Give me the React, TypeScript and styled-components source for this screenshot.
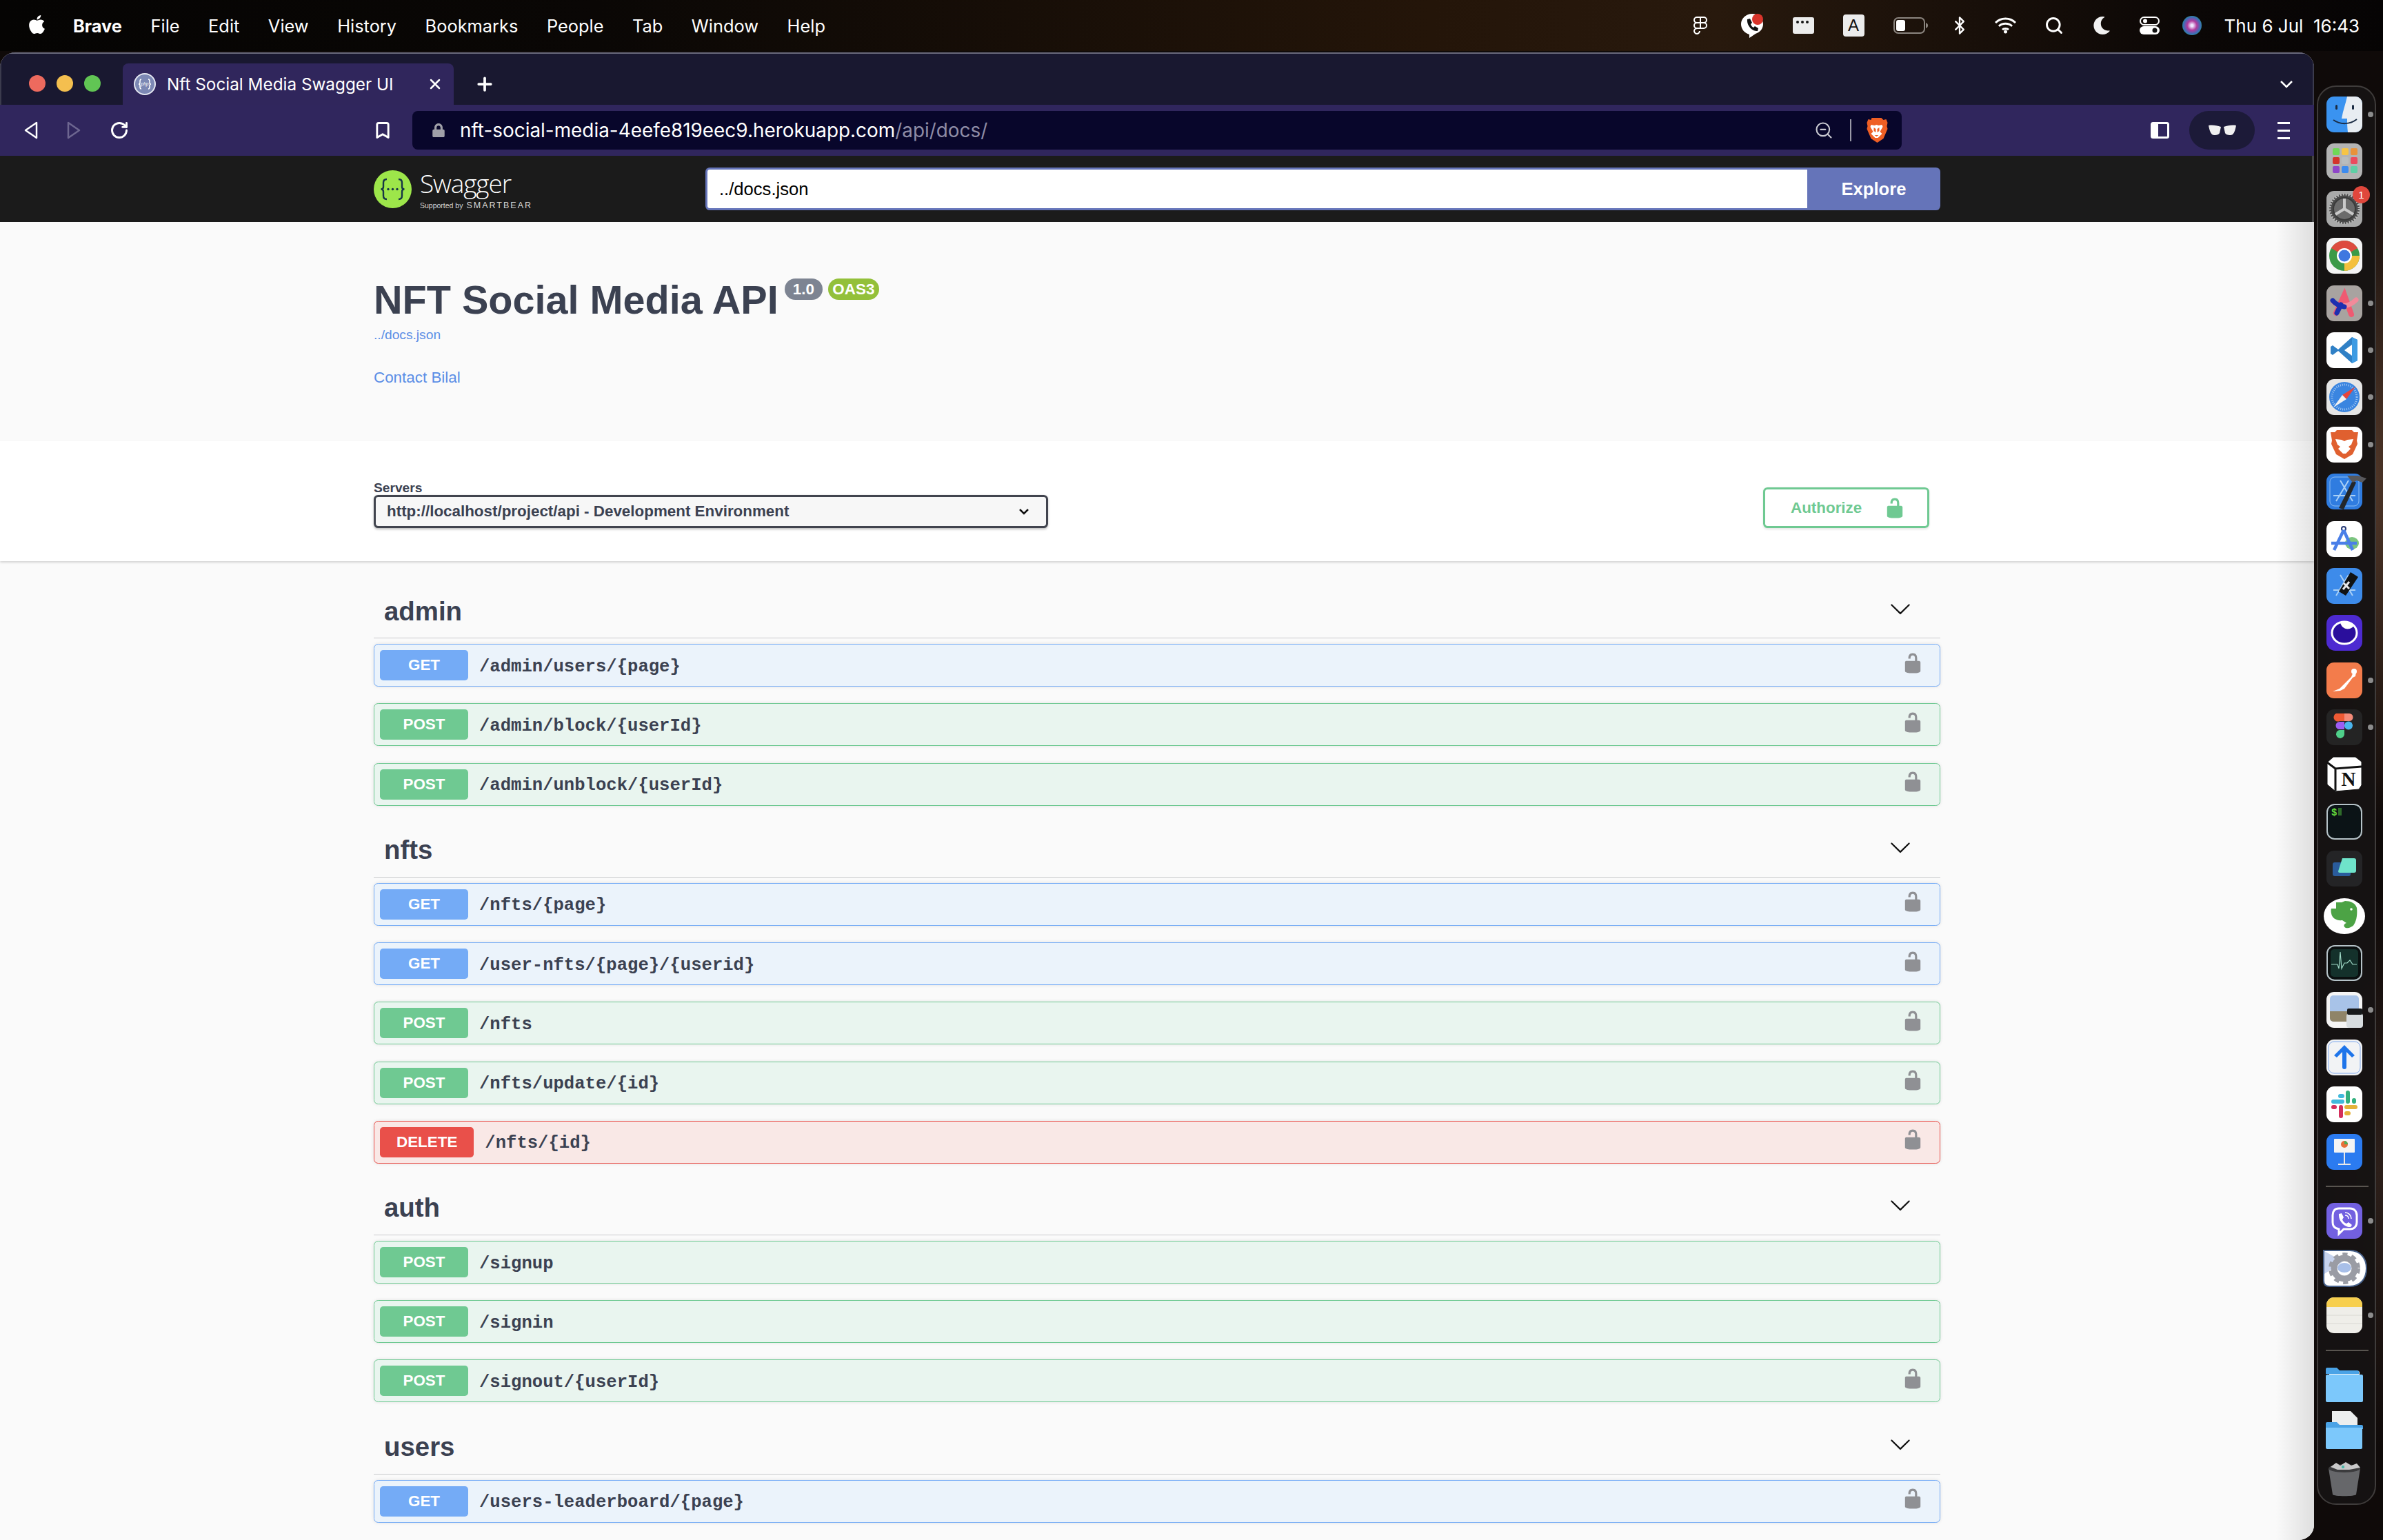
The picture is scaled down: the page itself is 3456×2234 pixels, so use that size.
import React from 'react';
import styled, { createGlobalStyle } from 'styled-components';
import { FaApple, FaLock, FaMoon } from 'react-icons/fa';
import { Bluetooth, Bookmark, Plus, RotateCw, Search, X, ZoomOut } from 'lucide-react';

const SANS = '"Liberation Sans", Arial, sans-serif';
const UI = 'Inter, "Liberation Sans", sans-serif';

type Method = 'GET' | 'POST' | 'DELETE';

const METHOD_COLORS: Record<Method, { badge: string; bg: string; border: string }> = {
  GET: { badge: '#74abf6', bg: '#ebf3fb', border: '#74abf6' },
  POST: { badge: '#6fc992', bg: '#e9f5ef', border: '#6fc992' },
  DELETE: { badge: '#e9504a', bg: '#f9e8e6', border: '#e9504a' },
};

const SECTIONS: { name: string; ops: { method: Method; path: string; open?: boolean }[] }[] = [
  {
    name: 'admin',
    ops: [
      { method: 'GET', path: '/admin/users/{page}' },
      { method: 'POST', path: '/admin/block/{userId}' },
      { method: 'POST', path: '/admin/unblock/{userId}' },
    ],
  },
  {
    name: 'nfts',
    ops: [
      { method: 'GET', path: '/nfts/{page}' },
      { method: 'GET', path: '/user-nfts/{page}/{userid}' },
      { method: 'POST', path: '/nfts' },
      { method: 'POST', path: '/nfts/update/{id}' },
      { method: 'DELETE', path: '/nfts/{id}' },
    ],
  },
  {
    name: 'auth',
    ops: [
      { method: 'POST', path: '/signup', open: true },
      { method: 'POST', path: '/signin', open: true },
      { method: 'POST', path: '/signout/{userId}' },
    ],
  },
  {
    name: 'users',
    ops: [{ method: 'GET', path: '/users-leaderboard/{page}' }],
  },
];

const MENU = ['File', 'Edit', 'View', 'History', 'Bookmarks', 'People', 'Tab', 'Window', 'Help'];

const UNLOCK_PATH =
  'M15.8 8H14V5.6C14 2.703 12.665 1 10 1 7.334 1 6 2.703 6 5.6V6h2v-.801C8 3.754 8.797 3 10 3c1.203 0 2 .754 2 2.199V8H4c-.553 0-1 .646-1 1.199V17c0 .549.428 1.139.951 1.307l1.197.387C5.672 18.861 6.55 19 7.1 19h5.8c.549 0 1.428-.139 1.951-.307l1.196-.387c.524-.167.953-.757.953-1.306V9.199C17 8.646 16.352 8 15.8 8z';

const GlobalStyle = createGlobalStyle`
  html, body { margin: 0; padding: 0; background: #0b0807; }
  * { box-sizing: border-box; }
`;

const Screen = styled.div`
  width: 3456px;
  height: 2234px;
  overflow: hidden;
  display: flex;
  flex-direction: column;
  font-family: ${SANS};
  background:
    radial-gradient(ellipse 90px 500px at 3440px 700px, #53392a 0%, rgba(83, 57, 42, 0) 100%),
    radial-gradient(ellipse 90px 400px at 3450px 1700px, #2c1f1a 0%, rgba(44, 31, 26, 0) 100%),
    #0f0a09;
`;

const MenuBar = styled.header`
  height: 74px;
  flex: none;
  display: flex;
  align-items: center;
  padding: 0 34px 0 38px;
  color: #fff;
  background: linear-gradient(90deg, #050403 0%, #0a0705 25%, #241509 60%, #28190d 72%, #0b0706 92%, #060404 100%);
`;

const AppleMark = styled(FaApple)`
  margin-top: -4px;
`;

const MenuItems = styled.nav`
  display: flex;
  align-items: center;
  gap: 41.5px;
  margin-left: 37px;
  font-family: ${UI};
  font-size: 25.4px;
`;

const MenuItem = styled.span<{ $bold?: boolean }>`
  font-weight: ${p => (p.$bold ? 700 : 400)};
`;

const StatusArea = styled.div`
  margin-left: auto;
  display: flex;
  align-items: center;
  gap: 42px;
`;

const FigmaGlyph = styled.svg`
  margin-right: 6px;
`;

const KeyboardBadge = styled.span`
  width: 31px;
  height: 32px;
  border-radius: 4px;
  background: #ececec;
  color: #111;
  font-size: 24px;
  display: flex;
  align-items: center;
  justify-content: center;
`;

const BluetoothGlyph = styled(Bluetooth)`
  margin: 0 -6px 0 -10px;
`;

const SearchGlyph = styled(Search)`
  margin: 0 -2px;
`;

const MoonGlyph = styled(FaMoon)`
  margin-left: 2px;
`;

const SiriOrb = styled.svg`
  margin-left: -9px;
`;

const Clock = styled.span`
  font-family: ${UI};
  font-size: 26px;
  white-space: pre;
  margin-left: -9px;
`;

const Desktop = styled.div`
  flex: 1;
  min-height: 0;
  display: flex;
  padding-top: 2px;
`;

const BrowserWindow = styled.main`
  width: 3356px;
  flex: none;
  display: flex;
  flex-direction: column;
  border-radius: 22px 22px 22px 0;
  overflow: hidden;
  position: relative;
  background: #fafafa;
`;

const TabStrip = styled.div`
  height: 76px;
  flex: none;
  display: flex;
  align-items: flex-end;
  background: #191830;
  border-top: 2px solid #6a6a7c;
  box-shadow: inset -2px 0 0 #3b3b4d, inset 2px 0 0 #3b3b4d;
  padding-left: 42px;
`;

const TrafficLights = styled.div`
  display: flex;
  gap: 16px;
  height: 60px;
  align-items: center;
  margin-right: 32px;
  padding-bottom: 2px;
`;

const Light = styled.i<{ $color: string }>`
  width: 24px;
  height: 24px;
  border-radius: 50%;
  background: ${p => p.$color};
`;

const Tab = styled.div`
  width: 480px;
  height: 60px;
  display: flex;
  align-items: center;
  padding: 0 15px 0 16px;
  background: #30265c;
  border-radius: 8px 8px 0 0;
  color: #fff;
`;

const TabTitle = styled.span`
  margin-left: 16px;
  font-family: ${UI};
  font-size: 24.3px;
  flex: 1;
  white-space: nowrap;
`;

const NewTab = styled.div`
  margin-left: 30px;
  height: 60px;
  display: flex;
  align-items: center;
  color: #fff;
`;

const TabMenu = styled.svg`
  margin: 0 31px 24px auto;
`;

const Toolbar = styled.div`
  height: 74px;
  flex: none;
  display: flex;
  align-items: center;
  background: #30265d;
  color: #fff;
  padding: 0 35px;
`;

const NavIcons = styled.div`
  display: flex;
  align-items: center;
  gap: 42px;
  width: 506px;
`;

const AddressBar = styled.div`
  margin-left: 29px;
  width: 2160px;
  height: 56px;
  flex: none;
  display: flex;
  align-items: center;
  padding: 0 20px 0 28px;
  border-radius: 8px;
  background: #08062b;
`;

const Url = styled.span`
  margin-left: 21px;
  font-family: ${UI};
  font-size: 27.9px;
  color: #fff;
  flex: 1;
  white-space: nowrap;
`;

const UrlDim = styled.span`
  color: #8e8ca6;
`;

const AddressDivider = styled.i`
  width: 2px;
  height: 32px;
  margin: 0 20px 0 24px;
  background: #9a9aa8;
`;

const ToolbarRight = styled.div`
  margin-left: auto;
  display: flex;
  align-items: center;
`;

const WalletPill = styled.div`
  width: 95px;
  height: 56px;
  margin: 0 33px 0 29px;
  border-radius: 28px;
  background: #1c1a38;
  display: flex;
  align-items: center;
  justify-content: center;
`;

const SwaggerBar = styled.div`
  height: 96px;
  flex: none;
  background: #1b1b1b;
  box-shadow: inset -3px 0 0 #444;
  padding: 0 0 0 542px;
  display: flex;
  align-items: center;
`;

const Brand = styled.div`
  width: 481px;
  display: flex;
  align-items: center;
  gap: 12px;
  color: #fff;
`;

const BrandText = styled.div`
  display: flex;
  flex-direction: column;
`;

const BrandName = styled.span`
  font-family: 'Open Sans', sans-serif;
  font-weight: 300;
  font-size: 37px;
  line-height: 46px;
  letter-spacing: -1.1px;
`;

const BrandSub = styled.span`
  margin-top: 2px;
  font-size: 10.5px;
  line-height: 14px;
  color: #d8d8d8;
  white-space: nowrap;
`;

const BrandBear = styled.span`
  font-size: 12.5px;
  font-weight: 400;
  letter-spacing: 2px;
  margin-left: 5px;
`;

const ExploreForm = styled.div`
  width: 1791px;
  height: 62px;
  display: flex;
`;

const UrlInput = styled.div`
  flex: 1;
  background: #fff;
  border: 3.2px solid #6574b9;
  border-right: 0;
  border-radius: 6.4px 0 0 6.4px;
  padding-left: 17px;
  font-size: 25.6px;
  color: #000;
  display: flex;
  align-items: center;
`;

const ExploreButton = styled.div`
  width: 193px;
  background: #6574b9;
  border-radius: 0 6.4px 6.4px 0;
  color: #fff;
  font-size: 25.6px;
  font-weight: 700;
  display: flex;
  align-items: center;
  justify-content: center;
`;

const Page = styled.div`
  flex: 1;
  min-height: 0;
  background: #fafafa;
  color: #3b4151;
`;

const EdgeShade = styled.div`
  position: absolute;
  top: 246px;
  right: 0;
  bottom: 0;
  width: 56px;
  background: linear-gradient(90deg, rgba(0, 0, 0, 0) 0%, rgba(0, 0, 0, 0.11) 100%);
  pointer-events: none;
`;

const Info = styled.section`
  height: 318px;
  padding: 85px 0 0 542px;
`;

const TitleRow = styled.div`
  display: flex;
  align-items: flex-start;
`;

const Title = styled.h1`
  margin: 0 1px 0 0;
  font-size: 57.6px;
  line-height: 1;
  font-weight: 700;
`;

const Pill = styled.span<{ $color: string; $pad: number }>`
  height: 31px;
  margin: -3px 0 0 8px;
  padding: 0 ${p => p.$pad}px;
  border-radius: 16px;
  background: ${p => p.$color};
  color: #fff;
  font-size: 22.4px;
  font-weight: 700;
  line-height: 31px;
`;

const InfoLink = styled.a<{ $size: number; $top: number }>`
  display: block;
  margin-top: ${p => p.$top}px;
  font-size: ${p => p.$size}px;
  line-height: 1;
  color: #5b8ee6;
`;

const SchemeBar = styled.section`
  height: 174px;
  background: #fff;
  box-shadow: 0 1.6px 3.2px rgba(0, 0, 0, 0.15);
  padding: 57px 558px 0 542px;
  display: flex;
  justify-content: space-between;
  position: relative;
`;

const ServersBlock = styled.div`
  display: flex;
  flex-direction: column;
`;

const ServersLabel = styled.label`
  font-size: 19.2px;
  line-height: 21px;
  font-weight: 700;
`;

const ServerSelect = styled.div`
  width: 978px;
  height: 48px;
  padding: 0 24px 0 16px;
  border: 3.2px solid #41444e;
  border-radius: 6.4px;
  background: #f7f7f7;
  box-shadow: 0 1.6px 3.2px rgba(0, 0, 0, 0.25);
  font-size: 22.4px;
  font-weight: 700;
  display: flex;
  align-items: center;
  justify-content: space-between;
`;

const AuthorizeButton = styled.div`
  width: 241px;
  height: 59px;
  margin-top: 10px;
  padding: 0 31px 0 37px;
  border: 3.2px solid #6fc992;
  border-radius: 6.4px;
  box-shadow: 0 1.6px 3.2px rgba(0, 0, 0, 0.1);
  color: #6fc992;
  font-size: 22.4px;
  font-weight: 700;
  display: flex;
  align-items: center;
  justify-content: space-between;
`;

const Operations = styled.section`
  padding: 32px 542px 0;
`;

const TagHeader = styled.div`
  height: 80px;
  margin-bottom: 8.2px;
  padding: 0 42px 0 15px;
  border-bottom: 1.6px solid #c8c9cc;
  display: flex;
  align-items: center;
  justify-content: space-between;
`;

const TagName = styled.h3`
  margin: 0;
  padding-top: 2px;
  font-size: 38.4px;
  font-weight: 700;
`;

const TagChevron = styled.svg`
  margin-bottom: 6px;
  fill: #111;
`;

const OpRow = styled.div<{ $method: Method }>`
  height: 62px;
  margin-bottom: 24.2px;
  padding: 0 23px 0 8px;
  border: 1.6px solid ${p => METHOD_COLORS[p.$method].border};
  border-radius: 6.4px;
  background: ${p => METHOD_COLORS[p.$method].bg};
  box-shadow: 0 0 4.8px rgba(0, 0, 0, 0.1);
  display: flex;
  align-items: center;
`;

const MethodBadge = styled.span<{ $method: Method }>`
  min-width: 128px;
  height: 44px;
  padding: 0 24px;
  border-radius: 4.8px;
  background: ${p => METHOD_COLORS[p.$method].badge};
  color: #fff;
  font-size: 22.4px;
  font-weight: 700;
  display: flex;
  align-items: center;
  justify-content: center;
`;

const OpPath = styled.span`
  margin-left: 16px;
  padding-top: 4px;
  flex: 1;
  font-family: 'Liberation Mono', 'Courier New', monospace;
  font-size: 25.6px;
  font-weight: 700;
  color: #3b4151;
`;

const RowLock = styled.svg`
  margin-bottom: 7px;
  fill: #8f9094;
`;

const Dock = styled.aside`
  width: 86px;
  height: 2059px;
  flex: none;
  margin: 48px 0 0 4px;
  padding-top: 14px;
  border: 2px solid #3f3c3b;
  border-radius: 28px;
  background: rgba(22, 19, 19, 0.96);
  display: flex;
  flex-direction: column;
  align-items: center;
  gap: 16.4px;
`;

const DockItem = styled.div`
  position: relative;
  width: 52px;
  height: 52px;
  flex: none;
  margin-left: -6px;
`;

const RunDot = styled.i`
  position: absolute;
  left: 60px;
  top: 22px;
  width: 8px;
  height: 8px;
  border-radius: 50%;
  background: #8c8c8c;
`;

const NoticeBadge = styled.span`
  position: absolute;
  right: -11px;
  top: -7px;
  width: 25px;
  height: 25px;
  border-radius: 50%;
  background: #e0473c;
  color: #fff;
  font-size: 15px;
  display: flex;
  align-items: center;
  justify-content: center;
`;

const DockDivider = styled.hr`
  width: 62px;
  height: 2px;
  margin: 7px 0 7px 2px;
  border: 0;
  background: #58544f;
  flex: none;
`;

function SwaggerMark({ size }: { size: number }) {
  return (
    <svg width={size} height={size} viewBox="0 0 55 55">
      <circle cx="27.5" cy="27.5" r="27.5" fill="#9de64a" />
      <path
        d="M19 13c-4 0-5 2-5 5v6c0 2-1 3.500-3.500 3.500 2.500 0 3.500 1.500 3.500 3.500v6c0 3 1 5 5 5M36 13c4 0 5 2 5 5v6c0 2 1 3.500 3.500 3.500-2.500 0-3.500 1.500-3.500 3.500v6c0 3-1 5-5 5"
        fill="none"
        stroke="#173647"
        strokeWidth="2.400"
      />
      <circle cx="21" cy="27.500" r="1.700" fill="#173647" />
      <circle cx="27.500" cy="27.500" r="1.700" fill="#173647" />
      <circle cx="34" cy="27.500" r="1.700" fill="#173647" />
    </svg>
  );
}

function BraveLion({ width, height }: { width: number; height: number }) {
  return (
    <svg width={width} height={height} viewBox="0 0 32 36">
      <path d="M9 0h14l3 3 4-1 2 5-1 5 1 4-6 14-9 6-9-6L2 16l1-4-1-5 2-5 4 1z" fill="#ef5f24" />
      <path d="M8 10l5 1 3-1 3 1 5-1 1 3-4 7 3 3-6 6h-4l-6-6 3-3-4-7z" fill="#fff" />
      <path d="M12 14l3 2v5l-3-2zM20 14l-3 2v5l3-2zM13 25h6l-3 2z" fill="#ef5f24" />
    </svg>
  );
}

const Tile = ({ bg, rx = 11 }: { bg: string; rx?: number }) => <rect width="52" height="52" rx={rx} fill={bg} />;

const DOCK_ICONS: Record<string, React.ReactNode> = {
  finder: (
    <>
      <Tile bg="#3a93f0" />
      <path d="M30 0h12a10 10 0 0 1 10 10v32a10 10 0 0 1-10 10H31c-1-8-1-14-1-20h-8C24 20 28 10 30 0z" fill="#e8edf2" />
      <rect x="13" y="12" width="3" height="7" rx="1.500" fill="#1b2c44" />
      <rect x="37" y="12" width="3" height="7" rx="1.500" fill="#1b2c44" />
      <path d="M10 34c10 7 24 7 34-1" fill="none" stroke="#1b2c44" strokeWidth="2" />
    </>
  ),
  launchpad: (
    <>
      <Tile bg="#b3b3b3" />
      {['#6fd856', '#f6c445', '#e8923a', '#d3342b', '#b8bcbd', '#ec4a5e', '#8f46c8', '#3d8bee', '#5ecfa5'].map((c, i) => (
        <rect key={c} x={9 + (i % 3) * 13} y={7 + Math.floor(i / 3) * 13} width="10" height="10" rx="2" fill={c} />
      ))}
    </>
  ),
  settings: (
    <>
      <Tile bg="#a9a9a9" />
      <circle cx="26" cy="26" r="22" fill="#4a4a4a" />
      <circle cx="26" cy="26" r="21" fill="none" stroke="#bdbdbd" strokeWidth="3" strokeDasharray="2 2" />
      <circle cx="26" cy="26" r="16" fill="#6b6b6b" stroke="#3a3a3a" strokeWidth="2" />
      <path d="M26 26V11M26 26L13 34M26 26l13 8" stroke="#c9c9c9" strokeWidth="4" />
    </>
  ),
  chrome: (
    <>
      <Tile bg="#f4f4f4" />
      <circle cx="26" cy="26" r="22" fill="#3c9a48" />
      <path d="M26 26L7 15A22 22 0 0 1 45 15z" fill="#dd4b3e" />
      <path d="M26 26h22A22 22 0 0 1 26 48z" fill="#f4c03c" />
      <circle cx="26" cy="26" r="11" fill="#fff" />
      <circle cx="26" cy="26" r="8.500" fill="#3f78e0" />
    </>
  ),
  arc: (
    <>
      <Tile bg="#a8a3a0" />
      <path d="M36 42L26 14 14 40" fill="none" stroke="#ef5a72" strokeWidth="8" strokeLinecap="round" />
      <path d="M10 24c8 8 22 8 33-3" fill="none" stroke="#f28a9a" strokeWidth="7" strokeLinecap="round" />
      <path d="M9 22c5 6 10 8 17 9M15 40l6-12" fill="none" stroke="#1c2fb0" strokeWidth="7" strokeLinecap="round" />
    </>
  ),
  vscode: (
    <>
      <Tile bg="#fff" />
      <path d="M37 7l8 4v30l-8 4-20-18-8 6-3-2v-10l3-2 8 6z" fill="#2f80c6" />
      <path d="M37 7l8 4v30l-8 4z" fill="#3d9be3" />
      <path d="M37 18L26 26l11 8z" fill="#fff" />
    </>
  ),
  safari: (
    <>
      <Tile bg="#e6e6e6" />
      <circle cx="26" cy="26" r="22" fill="#3a85e0" />
      <circle cx="26" cy="26" r="18" fill="none" stroke="#a9cbf3" strokeWidth="3" strokeDasharray="1 2" />
      <path d="M42 11L23 23l6 6z" fill="#e9443a" />
      <path d="M10 41l19-12-6-6z" fill="#f1f1f1" />
    </>
  ),
  brave: (
    <>
      <Tile bg="#fff" />
      <path d="M15 5h22l3 3 6 0-2 12 1 5-7 15-12 7-12-7-7-15 1-5-2-12 6 0z" fill="#e0602f" />
      <path d="M13 18l9 1 4 2 4-2 9-1-3 8-4 3 3 3-7 7h-4l-7-7 3-3-4-3z" fill="#fff" />
    </>
  ),
  xcode: (
    <>
      <Tile bg="#2f7ce0" />
      <rect x="5" y="5" width="42" height="42" rx="7" fill="none" stroke="#8dbdf2" strokeWidth="1" />
      <path d="M14 40L32 10M38 40L20 10M10 32h32" stroke="#a9d0f6" strokeWidth="2" />
      <path d="M18 50L38 10l5 3-18 39z" fill="#23272b" />
      <path d="M30 3h16l12 4-6 6-8-3-6 3z" fill="#59595c" />
    </>
  ),
  android: (
    <>
      <Tile bg="#fff" />
      <ellipse cx="37" cy="32" rx="10" ry="9" fill="#7bc47f" />
      <circle cx="25" cy="11" r="3" fill="none" stroke="#273a75" strokeWidth="2" />
      <path d="M25 13L11 42M25 13l13 29M7 32h37" stroke="#4a7fe8" strokeWidth="4.500" fill="none" />
    </>
  ),
  simulator: (
    <>
      <Tile bg="#3d8bea" />
      <path d="M14 40L32 10M38 40L20 10M10 32h32" stroke="#a9d0f6" strokeWidth="2" />
      <path d="M35 6l11 7-18 27-10-6z" fill="#101214" />
      <path d="M25 22l8 8M33 20l-9 11" stroke="#e8e8e8" strokeWidth="3" />
    </>
  ),
  proton: (
    <>
      <Tile bg="#4d2ad1" rx={13} />
      <ellipse cx="26" cy="26" rx="18" ry="16" fill="#2a0e9c" stroke="#fff" strokeWidth="3" />
      <path d="M20 11c1 6 7 11 14 9 3-1 5-3 6-5-4-4-13-7-20-4z" fill="#fff" />
    </>
  ),
  postman: (
    <>
      <Tile bg="#f37c4b" />
      <path d="M9 42l10-4 17-17 2-5 5-2-1 6-4 2-12 16-6 3z" fill="#fff" />
      <circle cx="40" cy="13" r="4" fill="#fff" />
    </>
  ),
  figma: (
    <>
      <Tile bg="#242424" />
      <path d="M14 6h12v11H19a5.500 5.500 0 0 1-5-11z" fill="#ee5a34" />
      <path d="M26 6h7a5.500 5.500 0 0 1 0 11h-7z" fill="#f38b79" />
      <path d="M19 18h7v11h-7a5.500 5.500 0 0 1 0-11z" fill="#9d5cf2" />
      <circle cx="32" cy="23.500" r="6" fill="#4ab5ee" />
      <path d="M19 30h7v6a6 6 0 1 1-7-6z" fill="#4fd08a" />
    </>
  ),
  notion: (
    <>
      <path d="M10 1l32 0 9 7v34l-4 6-34 3-12-10V9z" fill="#fff" stroke="#111" strokeWidth="1" />
      <path d="M1 9l12 9 38-3M13 18v32" fill="none" stroke="#111" strokeWidth="3" />
      <text x="32" y="43" textAnchor="middle" fontFamily="Liberation Serif, serif" fontWeight="700" fontSize="29" fill="#111">N</text>
    </>
  ),
  terminal: (
    <>
      <rect x="1" y="1" width="50" height="50" rx="11" fill="#0b1316" stroke="#b5c2c7" strokeWidth="2" />
      <text x="7" y="17" fontFamily="Liberation Mono, monospace" fontWeight="700" fontSize="14" fill="#62d73d">$</text>
      <rect x="17" y="6" width="5" height="11" fill="#2f6b2a" />
    </>
  ),
  linear: (
    <>
      <Tile bg="#242426" />
      <rect x="9" y="17" width="26" height="20" rx="3" fill="#2a5c9c" />
      <path d="M23 11h17a3 3 0 0 1 3 3v15a3 3 0 0 1-3 3H19a2 2 0 0 1-2-2z" fill="#6fe3ca" />
    </>
  ),
  evernote: (
    <>
      <ellipse cx="26" cy="26" rx="30" ry="26" fill="#fff" />
      <path d="M14 6h8l5-2c8 0 15 3 17 10 1 8 0 18-4 24-2 4-9 6-12 5-4-2-3-6 1-7l-6-4c-8 1-15-3-16-10-1-5 0-7 0-7h7z" fill="#4ca345" />
      <circle cx="36" cy="16" r="1.800" fill="#fff" />
    </>
  ),
  activity: (
    <>
      <rect x="1" y="1" width="50" height="50" rx="11" fill="#0a0f0f" stroke="#b5c2c7" strokeWidth="2" />
      <rect x="6" y="6" width="40" height="40" rx="5" fill="#14312b" />
      <path d="M7 28h9l2 6 2-24 2 24 4-8 4 0 4-4 4 6h6" fill="none" stroke="#9fd8c5" strokeWidth="1.200" />
    </>
  ),
  preview: (
    <>
      <Tile bg="#f4f4f4" />
      <rect x="5" y="5" width="42" height="38" rx="5" fill="#a8c3e8" />
      <path d="M5 28h42v10a5 5 0 0 1-5 5H10a5 5 0 0 1-5-5z" fill="#8f8468" />
      <rect x="29" y="31" width="24" height="21" rx="4" fill="#d7dcdf" />
      <rect x="30" y="24" width="22" height="9" rx="2" fill="#17191b" />
    </>
  ),
  transporter: (
    <>
      <Tile bg="#f2f3f5" />
      <rect x="3" y="3" width="46" height="46" rx="8" fill="none" stroke="#7da6ec" strokeWidth="1" />
      <path d="M26 8L11 23l4 3 8-8v22a3 3 0 0 0 6 0V18l8 8 4-3z" fill="#1f75ea" />
    </>
  ),
  slack: (
    <>
      <Tile bg="#fff" />
      <path d="M10 22h13M23 14h-3" stroke="#41b9dc" strokeWidth="6" strokeLinecap="round" />
      <path d="M31 9v13M40 20v2" stroke="#33b07e" strokeWidth="6" strokeLinecap="round" />
      <path d="M42 30H29M29 39h3" stroke="#e5b23a" strokeWidth="6" strokeLinecap="round" />
      <path d="M21 30v13M10 30h2" stroke="#d42f5c" strokeWidth="6" strokeLinecap="round" />
    </>
  ),
  keynote: (
    <>
      <Tile bg="#2b7bf0" />
      <rect x="11" y="7" width="30" height="20" rx="1" fill="#f4f4f4" />
      <circle cx="26" cy="15" r="5" fill="#e8703a" />
      <path d="M26 15V10a5 5 0 0 1 5 5z" fill="#4cae5a" />
      <path d="M25 27h2v18h-2z" fill="#e8e8e8" />
      <rect x="17" y="43" width="18" height="2" fill="#e8e8e8" />
    </>
  ),
  viber: (
    <>
      <Tile bg="#7260e0" />
      <path d="M18 8h16c6 0 10 4 10 10v10c0 6-4 10-10 10h-9l-7 7v-7c-6-1-9-5-9-10V18c0-6 3-10 9-10z" fill="none" stroke="#fff" strokeWidth="3" />
      <path d="M18 16l4-1 3 6-2 3c1 3 3 5 6 6l3-2 5 4-2 3c-9 1-18-9-17-19z" fill="#fff" />
      <path d="M27 14c5 0 9 4 9 9M27 18c3 0 5 2 5 5" fill="none" stroke="#fff" strokeWidth="1.500" />
    </>
  ),
  cog: (
    <>
      <path d="M-4 0h38c14 0 24 10 24 26 0 16-10 26-24 26H4C-2 52-4 48-4 44z" fill="#fff" stroke="#47618a" strokeWidth="2" />
      <path d="M-3 1L24 16-3 34z" fill="#c6d3ee" />
      <circle cx="26" cy="26" r="15" fill="none" stroke="#9a9ca4" strokeWidth="9" />
      <circle cx="26" cy="26" r="20" fill="none" stroke="#9a9ca4" strokeWidth="6" strokeDasharray="7 6" />
      <ellipse cx="26" cy="25" rx="10" ry="7" fill="#a8bfe8" />
    </>
  ),
  notes: (
    <>
      <Tile bg="#efeee9" />
      <path d="M0 14V11A11 11 0 0 1 11 0h30a11 11 0 0 1 11 11v3z" fill="#f7cf4e" />
      <path d="M0 26h52M0 38h52" stroke="#d9d8d2" strokeWidth="1" />
    </>
  ),
  folderA: (
    <>
      <rect x="4" y="6" width="44" height="24" rx="2" fill="#f4f4f4" />
      <path d="M-1 3a2 2 0 0 1 2-2h14l4 4h26a2 2 0 0 1 2 2v3H-1z" fill="#4aa3e6" />
      <path d="M-1 13a2 2 0 0 1 2-2h50a2 2 0 0 1 2 2v36a2 2 0 0 1-2 2H1a2 2 0 0 1-2-2z" fill="#7cc8fb" />
    </>
  ),
  folderB: (
    <>
      <path d="M8-4h27l10 10v12H8z" fill="#eceeee" />
      <path d="M-1 14a2 2 0 0 1 2-2h14l4 4h32a2 2 0 0 1 2 2v4H-1z" fill="#4aa3e6" />
      <path d="M-1 20h52a1 1 0 0 1 1 1v28a2 2 0 0 1-2 2H1a2 2 0 0 1-2-2z" fill="#7cc8fb" />
    </>
  ),
  trash: (
    <>
      <path d="M3 10h46l-6 38c-1 3-33 3-34 0z" fill="#66676a" />
      <ellipse cx="26" cy="10" rx="23" ry="6" fill="#3b3b3d" />
      <path d="M6 8l8-6 6 4 8-5 8 5 8-3 5 6-16 3H16z" fill="#c9c9c9" />
      <path d="M22 6h4v4h-4z" fill="#4fb6a8" />
    </>
  ),
};

const DockIcon = ({ name }: { name: string }) => (
  <svg width="52" height="52" viewBox="0 0 52 52" overflow="visible">
    {DOCK_ICONS[name]}
  </svg>
);

const DOCK_GROUPS: { name: string; running?: boolean; badge?: string }[][] = [
  [
    { name: 'finder', running: true },
    { name: 'launchpad' },
    { name: 'settings', badge: '1' },
    { name: 'chrome' },
    { name: 'arc', running: true },
    { name: 'vscode', running: true },
    { name: 'safari', running: true },
    { name: 'brave', running: true },
    { name: 'xcode' },
    { name: 'android' },
    { name: 'simulator' },
    { name: 'proton' },
    { name: 'postman', running: true },
    { name: 'figma', running: true },
    { name: 'notion' },
    { name: 'terminal' },
    { name: 'linear' },
    { name: 'evernote' },
    { name: 'activity' },
    { name: 'preview', running: true },
    { name: 'transporter' },
    { name: 'slack' },
    { name: 'keynote' },
  ],
  [{ name: 'viber', running: true }, { name: 'cog' }, { name: 'notes', running: true }],
  [{ name: 'folderA' }, { name: 'folderB' }, { name: 'trash' }],
];

function StatusIcons() {
  return (
    <StatusArea>
      <FigmaGlyph width="20" height="26" viewBox="0 0 20 26" fill="none" stroke="#fff" strokeWidth="2">
        <rect x="1" y="1" width="18" height="8" rx="4" />
        <rect x="1" y="9" width="18" height="8" rx="4" />
        <path d="M10 1v16M6 17c-3 0-5 2-5 4s2 4 4 4 4-2 4-4" />
      </FigmaGlyph>
      <svg width="34" height="36" viewBox="0 0 34 36">
        <path d="M17 1c9 0 16 7 16 15 0 7-5 12-11 14l-9 6v-5C6 29 1 23 1 16 1 8 8 1 17 1z" fill="#fff" />
        <path d="M10 9l4-1 3 6-2 2c1 3 2 4 4 5l2-2 5 3-1 4c-8 1-16-8-15-17z" fill="#111" />
        <circle cx="25" cy="9" r="8" fill="#d8342b" />
      </svg>
      <svg width="31" height="24" viewBox="0 0 31 24">
        <rect width="31" height="24" rx="3" fill="#ececec" />
        <circle cx="7" cy="7" r="2" fill="#111" />
        <circle cx="14" cy="7" r="2" fill="#111" />
        <circle cx="21" cy="7" r="2" fill="#111" />
      </svg>
      <KeyboardBadge>A</KeyboardBadge>
      <svg width="50" height="24" viewBox="0 0 50 24">
        <rect x="1" y="1" width="44" height="22" rx="6" fill="none" stroke="#8b857f" strokeWidth="2" />
        <rect x="4" y="4" width="13" height="16" rx="3" fill="#fff" />
        <path d="M47 8c2 1 3 2 3 4s-1 3-3 4z" fill="#8b857f" />
      </svg>
      <BluetoothGlyph size={28} color="#fff" strokeWidth={2} />
      <svg width="33" height="24" viewBox="0 0 33 24" fill="none" stroke="#fff" strokeWidth="3">
        <path d="M2 8c8-8 21-8 29 0M7 13c5-5 14-5 19 0M12 18c2-2 7-2 9 0" />
        <circle cx="16.500" cy="21" r="2.500" fill="#fff" stroke="none" />
      </svg>
      <SearchGlyph size={28} color="#fff" strokeWidth={2.500} />
      <MoonGlyph size={26} color="#f1f1f1" />
      <svg width="29" height="26" viewBox="0 0 29 26">
        <rect x="1" y="1" width="27" height="11" rx="5.500" fill="none" stroke="#fff" strokeWidth="2" />
        <circle cx="8" cy="6.500" r="3" fill="#fff" />
        <rect y="14" width="29" height="12" rx="6" fill="#fff" />
        <circle cx="22" cy="20" r="3.500" fill="#111" />
      </svg>
      <SiriOrb width="28" height="28" viewBox="0 0 28 28">
        <defs>
          <radialGradient id="siri" cx="0.500" cy="0.500" r="0.550">
            <stop offset="0.100" stopColor="#efe6ff" />
            <stop offset="0.450" stopColor="#b03a9e" />
            <stop offset="0.800" stopColor="#3a6fb8" />
            <stop offset="1" stopColor="#2a9a80" />
          </radialGradient>
        </defs>
        <circle cx="14" cy="14" r="14" fill="url(#siri)" />
      </SiriOrb>
      <Clock>Thu 6 Jul  16:43</Clock>
    </StatusArea>
  );
}

function BrowserChrome() {
  return (
    <>
      <TabStrip>
        <TrafficLights>
          <Light $color="#ed6a5e" />
          <Light $color="#f4bf4f" />
          <Light $color="#61c554" />
        </TrafficLights>
        <Tab>
          <svg width="32" height="32" viewBox="0 0 32 32" fill="none">
            <circle cx="16" cy="16" r="15" fill="#7c88b4" stroke="#e4e7f1" strokeWidth="2" />
            <path d="M11 9c-2 0-2 1.500-2 3v2c0 1-1 2-2 2 1 0 2 1 2 2v2c0 1.500 0 3 2 3M21 9c2 0 2 1.500 2 3v2c0 1 1 2 2 2-1 0-2 1-2 2v2c0 1.500 0 3-2 3" stroke="#fff" strokeWidth="1.500" />
            <text x="16" y="18" textAnchor="middle" fontFamily="Liberation Sans, sans-serif" fontStyle="italic" fontSize="6.500" fill="#fff">php</text>
          </svg>
          <TabTitle>Nft Social Media Swagger UI</TabTitle>
          <X size={24} color="#fff" strokeWidth={2.500} />
        </Tab>
        <NewTab>
          <Plus size={30} strokeWidth={3} />
        </NewTab>
        <TabMenu width="18" height="11" viewBox="0 0 18 11" fill="none" stroke="#fff" strokeWidth="2.500">
          <path d="M1 1l8 8 8-8" />
        </TabMenu>
      </TabStrip>
      <Toolbar>
        <NavIcons>
          <svg width="20" height="26" viewBox="0 0 20 26" fill="none" stroke="#fff" strokeWidth="2.500" strokeLinejoin="round">
            <path d="M18 2v22L2 13z" />
          </svg>
          <svg width="20" height="26" viewBox="0 0 20 26" fill="none" stroke="#6d6690" strokeWidth="2.500" strokeLinejoin="round">
            <path d="M2 2v22l16-11z" />
          </svg>
          <RotateCw size={28} strokeWidth={2.500} />
        </NavIcons>
        <Bookmark size={28} strokeWidth={2.500} />
        <AddressBar>
          <FaLock size={20} color="#a0a0a8" />
          <Url>
            nft-social-media-4eefe819eec9.herokuapp.com<UrlDim>/api/docs/</UrlDim>
          </Url>
          <ZoomOut size={28} color="#c9c9d1" strokeWidth={1.800} />
          <AddressDivider />
          <BraveLion width={33} height={36} />
        </AddressBar>
        <ToolbarRight>
          <svg width="27" height="24" viewBox="0 0 27 24">
            <rect x="1.500" y="1.500" width="24" height="21" rx="2" fill="none" stroke="#fff" strokeWidth="3" />
            <rect x="2" y="2" width="9" height="20" fill="#fff" />
          </svg>
          <WalletPill>
            <svg width="40" height="16" viewBox="0 0 40 16" fill="#f0f0f0">
              <path d="M0 1c6-1 12 0 18 2l-2 9c-1 3-8 4-11 2-3-3-4-8-5-13zM40 1c-6-1-12 0-18 2l2 9c1 3 8 4 11 2 3-3 4-8 5-13z" />
            </svg>
          </WalletPill>
          <svg width="18" height="25" viewBox="0 0 18 25" fill="#fff">
            <rect y="0" width="18" height="3" />
            <rect y="11" width="18" height="3" />
            <rect y="22" width="18" height="3" />
          </svg>
        </ToolbarRight>
      </Toolbar>
    </>
  );
}

export default function App() {
  return (
    <Screen>
      <GlobalStyle />
      <MenuBar>
        <AppleMark size={31} color="#fff" />
        <MenuItems>
          <MenuItem $bold>Brave</MenuItem>
          {MENU.map(m => (
            <MenuItem key={m}>{m}</MenuItem>
          ))}
        </MenuItems>
        <StatusIcons />
      </MenuBar>
      <Desktop>
        <BrowserWindow>
          <BrowserChrome />
          <SwaggerBar>
            <Brand>
              <SwaggerMark size={55} />
              <BrandText>
                <BrandName>Swagger</BrandName>
                <BrandSub>
                  Supported by<BrandBear>SMARTBEAR</BrandBear>
                </BrandSub>
              </BrandText>
            </Brand>
            <ExploreForm>
              <UrlInput>../docs.json</UrlInput>
              <ExploreButton>Explore</ExploreButton>
            </ExploreForm>
          </SwaggerBar>
          <Page>
            <Info>
              <TitleRow>
                <Title>NFT Social Media API</Title>
                <Pill $color="#7d8492" $pad={12}>1.0</Pill>
                <Pill $color="#93c03a" $pad={6.5}>OAS3</Pill>
              </TitleRow>
              <InfoLink $size={19.2} $top={11}>
                ../docs.json
              </InfoLink>
              <InfoLink $size={22.4} $top={42}>
                Contact Bilal
              </InfoLink>
            </Info>
            <SchemeBar>
              <ServersBlock>
                <ServersLabel>Servers</ServersLabel>
                <ServerSelect>
                  http://localhost/project/api - Development Environment
                  <svg width="16" height="10" viewBox="0 0 16 10" fill="none" stroke="#111" strokeWidth="2.500">
                    <path d="M2 2l6 6 6-6" />
                  </svg>
                </ServerSelect>
              </ServersBlock>
              <AuthorizeButton>
                Authorize
                <svg width="32" height="32" viewBox="0 0 20 20" fill="#6fc992">
                  <path d={UNLOCK_PATH} />
                </svg>
              </AuthorizeButton>
            </SchemeBar>
            <Operations>
              {SECTIONS.map(section => (
                <div key={section.name}>
                  <TagHeader>
                    <TagName>{section.name}</TagName>
                    <TagChevron width="32" height="32" viewBox="0 0 20 20">
                      <path d="M17.418 6.109c.272-.268.709-.268.979 0s.271.701 0 .969l-7.908 7.83c-.27.268-.707.268-.979 0l-7.908-7.83c-.27-.268-.27-.701 0-.969.271-.268.709-.268.979 0L10 13.25l7.418-7.141z" />
                    </TagChevron>
                  </TagHeader>
                  {section.ops.map(op => (
                    <OpRow key={op.path} $method={op.method}>
                      <MethodBadge $method={op.method}>{op.method}</MethodBadge>
                      <OpPath>{op.path}</OpPath>
                      {!op.open && (
                        <RowLock width="32" height="32" viewBox="0 0 20 20">
                          <path d={UNLOCK_PATH} />
                        </RowLock>
                      )}
                    </OpRow>
                  ))}
                </div>
              ))}
            </Operations>
          </Page>
          <EdgeShade />
        </BrowserWindow>
        <Dock>
          {DOCK_GROUPS.map((group, i) => (
            <React.Fragment key={group[0].name}>
              {i > 0 && <DockDivider />}
              {group.map(item => (
                <DockItem key={item.name}>
                  <DockIcon name={item.name} />
                  {item.running && <RunDot />}
                  {item.badge && <NoticeBadge>{item.badge}</NoticeBadge>}
                </DockItem>
              ))}
            </React.Fragment>
          ))}
        </Dock>
      </Desktop>
    </Screen>
  );
}
